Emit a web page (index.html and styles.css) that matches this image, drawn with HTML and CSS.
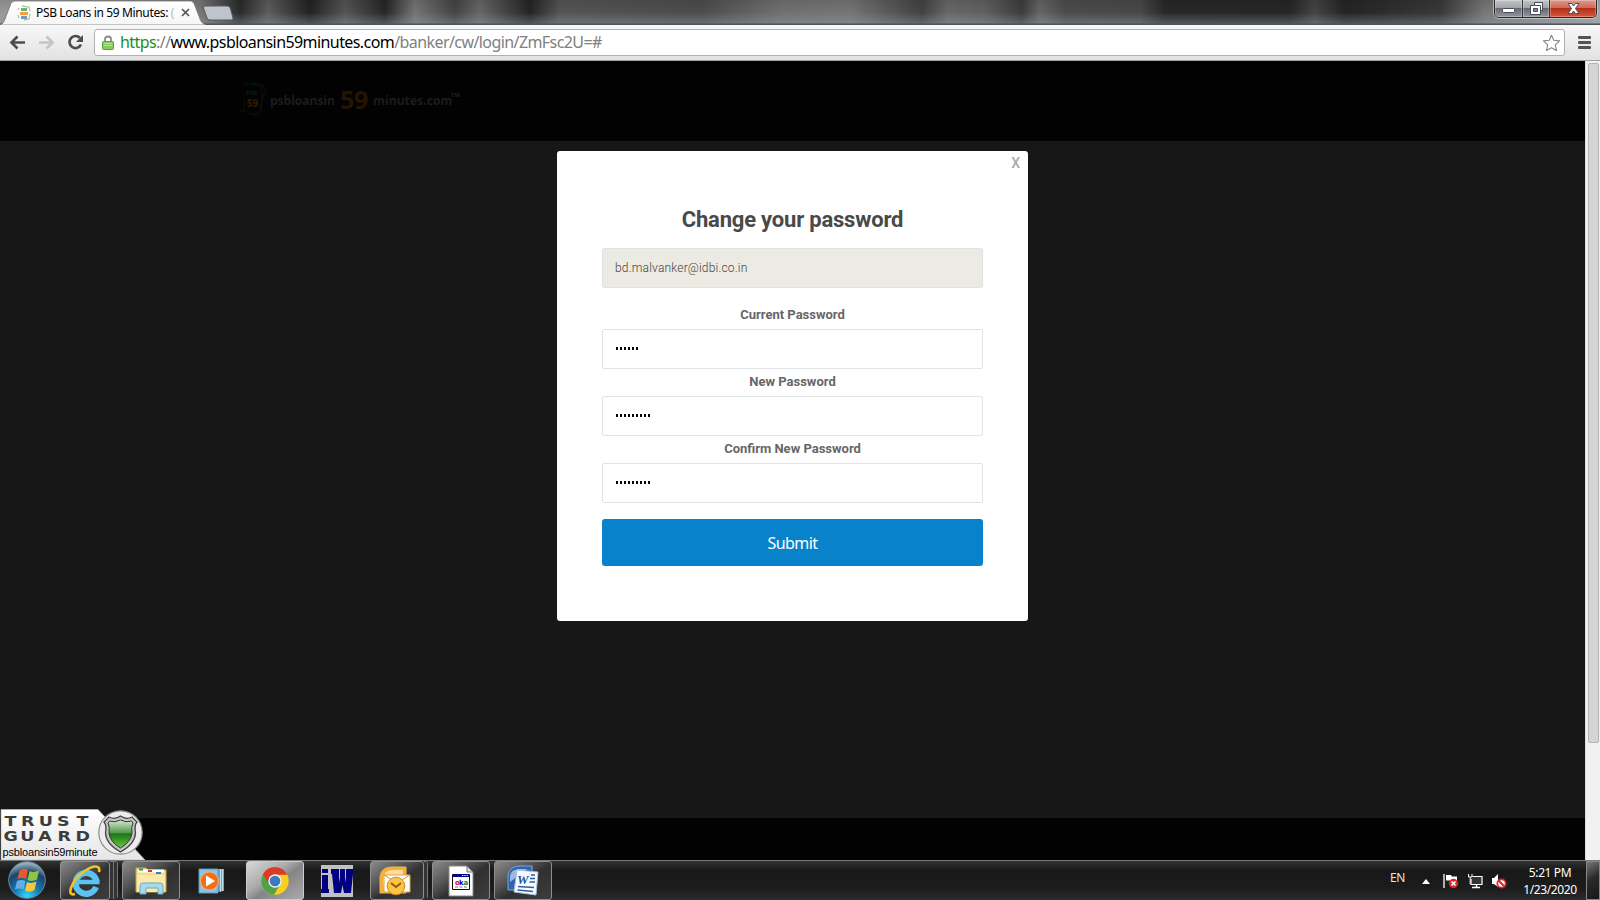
FILE: index.html
```html
<!DOCTYPE html>
<html lang="en">
<head>
<meta charset="utf-8">
<title>PSB Loans in 59 Minutes</title>
<link rel="stylesheet" href="styles.css">
</head>
<body>
<div class="screen">
  <header class="titlebar">
    <svg class="tabshape" width="240" height="25" viewBox="0 0 240 25">
      <defs><linearGradient id="tabg" x1="0" y1="0" x2="0" y2="1"><stop offset="0" stop-color="#fff"/><stop offset="1" stop-color="#f5f5f5"/></linearGradient></defs>
      <path d="M0 25C3 24 4 22 5 19L10 6C11 2 13 1 16 1H189C193 1 194 3 195 6L200 19C201 22 203 24 206 25Z" fill="url(#tabg)" stroke="#777" stroke-width=".8"/>
      <path d="M205 6H227C229 6 230 7 230.500 9L233 18Q233.500 20 231 20H210Q208 20 207 18L203.500 8Q203 6 205 6Z" fill="#bfc4ca" stroke="#555b63" stroke-width="1"/>
    </svg>
    <div class="tab">
      <svg width="16" height="16" viewBox="0 0 16 16"><path d="M6 1L13 2 14 6M14 9L13 14 8 15M3 13L2 10M2 5L3 3" fill="none" stroke="#a9ce91" stroke-width="1.300"/><path d="M5 3H11V6H5Z" fill="#73a98c"/><path d="M4 7H12V10H4Z" fill="#f2a13b"/><path d="M5 11H11V14H5Z" fill="#7897bd"/></svg>
      <span class="tab-title">PSB Loans in 59 Minutes: <i>(</i></span>
      <svg class="tab-close" width="9" height="9" viewBox="0 0 9 9"><path d="M1 1L8 8M8 1L1 8" stroke="#555" stroke-width="1.7"/></svg>
    </div>
    <div class="winbtns">
      <span class="wb min"><svg width="13" height="5"><rect x=".5" y=".5" width="12" height="4" rx="1" fill="#fff" stroke="#474b5b"/></svg></span>
      <span class="wb max"><svg width="13" height="13" viewBox="0 0 13 13"><path d="M4.500 .5H12.500V8.500H10.500V12.500H.5V3.500H4.500Z" fill="#fff" stroke="#474b5b"/><path d="M3.500 6.500H7.500V9.500H3.500Z" fill="#888" stroke="#474b5b"/><path d="M4.500 3.500H10.500V9" fill="none" stroke="#474b5b"/></svg></span>
      <span class="wb close"><svg width="13" height="11" viewBox="0 0 13 11"><path d="M1 .5H4.500L6.500 3 8.500 .5H12L8.500 5.500 12 10.500H8.500L6.500 8 4.500 10.500H1L4.500 5.500Z" fill="#fff" stroke="#474b5b"/></svg></span>
    </div>
  </header>

  <nav class="toolbar">
    <svg class="navicons" width="94" height="35" viewBox="0 0 94 35">
      <g fill="none" stroke-width="2.700"><path d="M25 17.500H12M17.500 11.500L11.500 17.500L17.500 23.500" stroke="#4d4d4d"/><path d="M39 17.500H52M46.500 11.500L52.500 17.500L46.500 23.500" stroke="#c5c5c5"/><path d="M80 13A6 6 0 1 0 81 19.500" stroke="#4d4d4d"/></g><path d="M83 10V17H76Z" fill="#4d4d4d"/>
    </svg>
    <div class="address">
      <svg width="12" height="15" viewBox="0 0 12 15"><path d="M3 7V4Q3 1.500 6 1.500T9 4V7" fill="none" stroke="#8c8c8c" stroke-width="1.800"/><rect x=".5" y="6.500" width="11" height="8" rx="1" fill="#8acb60" stroke="#58a533"/><path d="M2 8.500H10M2 10.500H10" stroke="#b4e28f"/></svg>
      <span class="url"><b class="sec">https</b>://<b>www.psbloansin59minutes.com</b>/banker/cw/login/ZmFsc2U=#</span>
      <svg class="star" width="19" height="18" viewBox="0 0 19 18"><path d="M9.500 1.200L11.800 6.300 17.600 6.900 13.300 10.800 14.500 16.500 9.500 13.700 4.500 16.500 5.700 10.800 1.400 6.900 7.200 6.300Z" fill="#fff" stroke="#858585" stroke-width="1.100" stroke-linejoin="round"/></svg>
    </div>
    <span class="menu"><i></i><i></i><i></i></span>
  </nav>

  <div class="content">
    <main class="page">
      <div class="site-head">
        <svg width="32" height="38" viewBox="0 0 32 38"><g fill="none" stroke="#0b1207"><path d="M8 3L24 4 23 33 6 31ZM13 1L28 7 19 35 1 29"/></g><path d="M7 5H21V32H7Z" fill="#020203"/><text x="14" y="14" text-anchor="middle" class="l-psb">PSB</text><text x="14.500" y="26" text-anchor="middle" class="l-59">59</text></svg>
        <span class="brand b1">psbloansin</span><span class="brand-num">59</span><span class="brand b2">minutes.com</span><span class="tm">TM</span>
      </div>
      <section class="backdrop">
        <form class="modal">
          <span class="x">X</span>
          <h1>Change your password</h1>
          <div class="field readonly">bd.malvanker@idbi.co.in</div>
          <label class="first">Current Password</label>
          <div class="field"><span class="dots d6"></span></div>
          <label>New Password</label>
          <div class="field"><span class="dots d9"></span></div>
          <label>Confirm New Password</label>
          <div class="field"><span class="dots d9"></span></div>
          <div class="submit">Submit</div>
        </form>
      </section>
      <div class="site-foot"></div>
      <div class="trust">
        <svg width="146" height="51" viewBox="0 0 146 51">
          <defs><linearGradient id="sh" x1="0" y1="0" x2="0" y2="1"><stop offset="0" stop-color="#d8e8d4"/><stop offset=".45" stop-color="#539b4b"/><stop offset=".5" stop-color="#18761b"/><stop offset="1" stop-color="#6bc936"/></linearGradient>
          <linearGradient id="tr" x1="0" y1="0" x2="0" y2="1"><stop offset="0" stop-color="#fff"/><stop offset="1" stop-color="#e6e6e6"/></linearGradient></defs>
          <path d="M1 .5H98L145 51H1Z" fill="url(#tr)" stroke="#bbb" stroke-width=".7"/>
          <g transform="scale(1.250 1)"><text x="3.600 16.800 31 45.600 61.200" y="17" class="tg">TRUST</text>
          <text x="2.800 16.200 30.600 46 60.400" y="32" class="tg">GUARD</text></g>
          <text x="2.500" y="47" textLength="95" class="tgs">psbloansin59minute</text>
          <circle cx="120.500" cy="23.500" r="21.700" fill="#ececec" stroke="#8c8c8c" stroke-width="1.200"/>
          <path d="M120.500 7Q126 11 132 8L137 13Q134 16 135.500 24Q135 35 120.500 43Q106 35 105.500 24Q107 16 104 13L109 8Q115 11 120.500 7Z" fill="#c5c5c5" stroke="#444" stroke-width="1.300"/>
          <path d="M120.500 11Q126 14 131.500 12L133 14Q131 18 132 24Q131 33 120.500 39Q110 33 109 24Q110 18 108 14L109.500 12Q115 14 120.500 11Z" fill="url(#sh)" stroke="#333" stroke-width="1"/>
        </svg>
      </div>
    </main>
    <aside class="scroll"><div class="thumb"></div></aside>
  </div>

  <footer class="taskbar">
    <svg class="start" width="60" height="39" viewBox="0 0 60 39">
      <defs><radialGradient id="orb" cx=".5" cy=".95" r=".9"><stop offset="0" stop-color="#35d8fa"/><stop offset=".4" stop-color="#1378b5"/><stop offset=".75" stop-color="#1b4469"/><stop offset="1" stop-color="#96afbf"/></radialGradient></defs>
      <circle cx="27" cy="19" r="18.300" fill="url(#orb)" stroke="#6d8796" stroke-width="1"/>
      <path d="M19.500 9.500Q24 6.500 28 9L26 18Q22 16 17.500 18Z" fill="#e7582a"/><path d="M29.500 10Q34 12 39 9.500L37 18.500Q32 21 27.500 19Z" fill="#8fc443"/><path d="M17 20Q21 18 25.500 20L23.500 28.500Q19 26.500 15 28.500Z" fill="#63b0e6"/><path d="M27 21Q31.500 23 36.500 20.500L34.500 29Q29.500 32 25 29.500Z" fill="#fcc63b"/>
    </svg>
    <span class="task ie"><svg width="34" height="32" viewBox="0 0 34 32"><g fill="none" stroke="#5cc2f3" stroke-width="6.200"><path d="M28 22A10.500 10.500 0 1 1 28.500 16.500"/><path d="M9 17H31.500" stroke-width="4.500"/></g><path d="M7 29C-2 32 3 17 14 8C24 0 33-1 31 7" fill="none" stroke="#f5c321" stroke-width="2.600"/></svg></span>
    <span class="stack two"></span>
    <span class="task exp"><svg width="34" height="30" viewBox="0 0 34 30"><path d="M2 2H12L14 4H32V26H2Z" fill="#f3dd91" stroke="#c5a757"/><path d="M4 5H30" stroke="#fff" stroke-width="3"/><path d="M5 3.500H9" stroke="#20a52c" stroke-width="2"/><path d="M14 5H18" stroke="#d43b29" stroke-width="2"/><path d="M22 7H27" stroke="#2880ce" stroke-width="2"/><path d="M3 9H31V26H3Z" fill="#fae9a9"/><path d="M6 28V20Q6 17 9 17H26Q29 17 29 20V28H24V22H12V28Z" fill="#a8daee" stroke="#6ba9c8"/></svg></span>
    <span class="task plain media"><svg width="28" height="26" viewBox="0 0 28 26"><path d="M8 1H26V23L8 25Z" fill="#69a9ce"/><path d="M1 1H20V25H1Z" fill="#8dc4e3" stroke="#5c96ba"/><path d="M22.500 1V24M24.500 1V23" stroke="#c0e0f0"/><circle cx="11.500" cy="13" r="9" fill="#ef6f1b" stroke="#f9b073"/><path d="M8 7.500L17 13 8 18.500Z" fill="#fff"/></svg></span>
    <span class="task lit chrome"><svg width="28" height="28" viewBox="0 0 28 28"><circle cx="14" cy="14" r="13.700" fill="#f9cf20"/><path d="M14 14L2 7.200A13.700 13.700 0 0 1 26 7.500H14Z" fill="#dc3a2b"/><path d="M2 7.200A13.700 13.700 0 0 0 13 27.700L19.500 17 14 14Z" fill="#4fa344"/><path d="M2 7.200L8 17.500A7 7 0 0 1 14 7.500H26A13.700 13.700 0 0 0 2 7.200Z" fill="#dc3a2b"/><circle cx="14" cy="14" r="6.700" fill="#f3f3f3"/><circle cx="14" cy="14" r="5.300" fill="#3d79c2"/></svg></span>
    <span class="task plain iw"><svg width="32" height="32" viewBox="0 0 32 32"><path d="M0 0H32V32H0Z" fill="#c1c1c1"/><g fill="#000080"><path d="M1 4H7V8H1ZM1 10H7V24H8V28H0V24H1ZM10 4H18V12L19 18V4H24V12L25 18V4H32V9L30 28H23L21.500 20 20 28H13L11 9H10Z"/></g></svg></span>
    <span class="task out"><svg width="32" height="30" viewBox="0 0 32 30"><path d="M1 27V11Q2 1 13 1H27V27Z" fill="#f6ad38" stroke="#f6b84a"/><path d="M4 24V12Q5 4 14 4H24V10H6Z" fill="#fbdc9e"/><path d="M5 9H31V26H5Z" fill="#fff" stroke="#e1a136"/><path d="M5 9L18 17 31 9" fill="none" stroke="#d79737"/><circle cx="17" cy="20" r="8.800" fill="#fbc646" stroke="#d4871b"/><path d="M12 17L17 21 22 17" fill="none" stroke="#8e5c14" stroke-width="2"/></svg></span>
    <span class="stack one"></span>
    <span class="task oka"><svg width="26" height="32" viewBox="0 0 26 32"><path d="M1 1H19L25 7V31H1Z" fill="#fff" stroke="#888"/><path d="M19 1V7H25Z" fill="#ddd" stroke="#777"/><path d="M4.500 9.500H21.500V24.500H4.500Z" fill="#fff" stroke="#111"/><path d="M5 9H21V12H5Z" fill="#000080"/><path d="M14 10.500H20" stroke="#fff" stroke-dasharray="1.300 1"/><text x="7" y="19.500" class="oka-t" fill="#d00020">o</text><text x="11" y="19.500" class="oka-t" fill="#0000d0">k</text><text x="15.500" y="19.500" class="oka-t" fill="#008a32">a</text><path d="M7 22H19" stroke="#777" stroke-dasharray="3 1.500"/></svg></span>
    <span class="task word"><svg width="32" height="31" viewBox="0 0 32 31"><path d="M1 25V11Q2 1 13 1H25V25Z" fill="#3263ad" stroke="#7ba5dd"/><path d="M3 17V11Q4 4 13 4H20Z" fill="#99b9e6"/><path d="M10 5L31 7 29 30 7 27Z" fill="#f6f9ff" stroke="#a9bddb"/><text x="10" y="19" class="word-w">W</text><path d="M24 10H28M23 13.500H28M22.500 17H28M11 21.500L27 22.500M10.500 25L26 26.500" stroke="#345c9d" stroke-width="1.700"/></svg></span>
    <div class="tray">
      <span class="en">EN</span>
      <svg class="up" width="8" height="5"><path d="M0 5L4 0 8 5Z" fill="#fff"/></svg>
      <svg class="flag" width="16" height="16" viewBox="0 0 16 16"><path d="M1 1V15" stroke="#fff" stroke-width="1.300"/><path d="M3 2H8L9 3.500H14V9H8L7 7.500H3Z" fill="#fff"/><circle cx="10.500" cy="10.500" r="4.700" fill="#dc2926"/><path d="M8.500 8.500L12.500 12.500M12.500 8.500L8.500 12.500" stroke="#fff" stroke-width="1.600"/></svg>
      <svg class="net" width="16" height="16" viewBox="0 0 16 16"><path d="M5.500 3.500H15V11.500H4V6" fill="#343434" stroke="#fff" stroke-width="1.200"/><path d="M9.500 12V14M5 14.500H13" stroke="#fff" stroke-width="1.500"/><path d="M1.500 1V4H5V1M3.200 4V11" fill="none" stroke="#fff"/></svg>
      <svg class="vol" width="16" height="16" viewBox="0 0 16 16"><path d="M1 5H3L7 1V14L3 11H1Z" fill="#fff"/><circle cx="10.500" cy="10.500" r="4.200" fill="#fff" stroke="#dc2926" stroke-width="1.800"/><path d="M7.500 7.500L13.500 13.500" stroke="#dc2926" stroke-width="2"/></svg>
      <div class="clock"><span class="time">5:21 PM</span><span class="date">1/23/2020</span></div>
      <span class="desk"></span>
    </div>
  </footer>
</div>
</body>
</html>
```
FILE: styles.css
```css
* { box-sizing: border-box; }
body { margin: 0; overflow: hidden; background: #000; font-family: "Noto Sans", "Open Sans", sans-serif; }
svg { display: block; flex: none; }
.screen { width: 1600px; height: 900px; display: flex; flex-direction: column; }
.titlebar { position: relative; height: 25px; flex: none; display: flex; justify-content: space-between;
  background: linear-gradient(180deg, rgba(0,0,0,.1), transparent 50%, rgba(150,160,170,.35) 90%, #50545a 97%), linear-gradient(90deg, #999 0, #777 200px, #2a2a2a 240px, #5c5c5c 268px, #222 310px, #555 345px, #262626 385px, #747474 415px, #444 455px, #666 480px, #242424 530px, #555 560px, #4c4c4c 700px, #707070 780px, #757575 850px, #424242 922px, #686868 948px, #606060 985px, #3c3c3c 1022px, #666 1040px, #4c4c4c 1065px, #484848 1140px, #282828 1165px, #262626 1290px, #444 1315px, #242424 1345px, #383838 1440px, #777 1485px, #a5a5a5 1600px); }
.tabshape { position: absolute; left: 0; top: 0; }
.tab { position: relative; display: flex; align-items: center; padding-left: 16px; width: 200px; height: 25px; }
.tab-title { margin-left: 4px; width: 141px; font-size: 12px; letter-spacing: -.36px; color: #000; white-space: nowrap; overflow: hidden; }
.tab-title i { font-style: normal; color: #bbb; }
.tab-close { margin-left: 4px; }
.winbtns { display: flex; width: 103px; height: 18px; margin-right: 3px; border: 1px solid #26282c; border-top: 0; border-radius: 0 0 5px 5px; overflow: hidden; box-shadow: 0 0 0 1px rgba(230,230,230,.55); }
.wb { display: flex; align-items: center; justify-content: center; border-right: 1px solid #33363b; background: linear-gradient(#c4c4c6 0, #a2a4a7 46%, #686a70 50%, #96989d 100%); box-shadow: inset 0 0 0 1px rgba(255,255,255,.28); }
.min { width: 28px; padding-top: 4px; }
.max { width: 27px; padding-bottom: 1px; }
.close { flex: 1; border: 0; padding-bottom: 1px; background: linear-gradient(#dc9a8c 0, #cd6a59 46%, #b52f18 50%, #d5583a 100%); }

.toolbar { height: 36px; flex: none; display: flex; align-items: flex-start; background: linear-gradient(#f8f8f8, #e2e2e2); border-bottom: 1px solid #9fa1a3; }
.address { margin-top: 4px; width: 1471px; height: 27px; border: 1px solid #b0b0b0; border-radius: 3px; background: #fff; display: flex; align-items: center; padding-left: 7px; }
.url { margin-left: 6px; font-size: 16px; line-height: 24px; letter-spacing: -.58px; color: #808080; white-space: nowrap; margin-top: -1px; }
.url b { font-weight: 400; color: #000; }
.url .sec { color: #1a8f1e; }
.star { margin-left: auto; margin-right: 3px; }
.menu { display: flex; flex-direction: column; gap: 2px; margin: 11px 0 0 13px; }
.menu i { width: 13px; height: 3px; background: #555; border-radius: 1px; }

.content { height: 799px; flex: none; display: flex; }
.page { position: relative; width: 1585px; display: flex; flex-direction: column; background: #171717; }
.site-head { height: 80px; flex: none; background: #020202; display: flex; padding: 20px 0 0 238px; }
.l-psb { font: bold 5px "Liberation Sans", sans-serif; fill: #06220f; }
.l-59 { font: 800 10px "Open Sans", sans-serif; fill: #2a1803; }
.brand { font: 700 12px/38px "Open Sans", sans-serif; color: #1c1c1c; white-space: nowrap; padding-top: 1px; }
.b1 { width: 70px; }
.brand-num { width: 33px; font: 700 25px/36px "Open Sans", sans-serif; color: #241400; letter-spacing: -.2px; }
.b2 { width: 78px; letter-spacing: .1px; }
.tm { font: 700 6px/28px "Open Sans", sans-serif; color: #202020; }
.backdrop { flex: 1; display: flex; justify-content: center; align-items: flex-start; padding-top: 10px; }
.modal { position: relative; width: 471px; height: 470px; background: #fff; border-radius: 3px; padding: 55px 45px 0; font-family: Roboto, sans-serif; display: flex; flex-direction: column; }
.x { position: absolute; right: 8px; top: 2px; font: 500 14px/20px Roboto, sans-serif; color: #aaa; }
h1 { margin: 0 0 15px; font-size: 22px; line-height: 27px; font-weight: 700; letter-spacing: -.2px; color: #494949; text-align: center; white-space: nowrap; }
.field { height: 40px; flex: none; border: 1px solid #dce4e5; border-radius: 2px; padding: 0 12px; display: flex; align-items: center; font-size: 12px; color: #555; }
.readonly { background: #ebebe4; font-weight: 300; letter-spacing: .18px; color: #444; }
label { height: 27px; flex: none; line-height: 25px; text-align: center; font-size: 13px; font-weight: 700; color: #666; }
.first { height: 41px; padding-top: 14px; }
.dots { height: 3px; margin-top: -2px; background: repeating-linear-gradient(90deg, #0b0018 0 2px, transparent 2px 4px); margin-left: 1px; }
.d6 { width: 23px; }
.d9 { width: 35px; }
.submit { margin-top: 16px; height: 47px; flex: none; border-radius: 3px; background: #0982cc; color: #fff; font: 16px/48px "Noto Sans", sans-serif; letter-spacing: -.6px; text-align: center; }
.site-foot { height: 42px; background: #020202; }
.trust { position: absolute; left: 0; bottom: 0; }
.tg { font: 700 14px "DejaVu Sans", sans-serif; fill: #3c3c3c; }
.tgs { font: 11px "Liberation Sans", sans-serif; fill: #000; }
.scroll { width: 15px; background: #f1f1f1; border-left: 1px solid #ddd; padding: 2px 1px 0 2px; }
.thumb { width: 11px; height: 680px; background: #d5d5d5; border: 1px solid #b4b4b4; border-radius: 2px; }

.taskbar { height: 40px; flex: none; display: flex; border-top: 1px solid #77797a; background: linear-gradient(#303132, #181818 25%, #1c1c1c 70%, #2b2b2b); }
.task { width: 58px; height: 39px; border: 1px solid #8e8e8e; border-radius: 3px; display: flex; align-items: center; justify-content: center; background: linear-gradient(145deg, #8a8a8a 0, #555 35%, #303030 55%, #3d3d3d 100%); }
.plain { border-color: transparent; background: none; }
.lit { border-color: #ccc; background: linear-gradient(145deg, #d8d8d8 0, #aaa 40%, #858585 55%, #ababab 100%); }
.ie { width: 50px; }
.stack { height: 38px; border-top: 1px solid #777; background: repeating-linear-gradient(90deg, #333 0 3px, #747474 3px 4px); border-radius: 0 3px 3px 0; }
.two { width: 8px; margin-right: 4px; }
.one { width: 4px; margin-right: 4px; }
.media { width: 64px; }
.chrome { margin-left: 2px; }
.iw { width: 66px; }
.out { width: 54px; padding-right: 4px; }
.word { margin-left: 4px; }
.oka-t { font: bold 7px "DejaVu Sans", sans-serif; }
.word-w { font: italic bold 13px "Liberation Serif", serif; fill: #24539b; }
.tray { display: flex; margin-left: auto; color: #fff; }
.en { width: 32px; font-size: 12px; line-height: 33px; letter-spacing: -.4px; color: #e6e6d8; }
.up { margin-top: 18px; }
.flag { margin: 12px 0 0 13px; }
.net { margin: 12px 0 0 8px; }
.vol { margin: 12px 0 0 8px; }
.clock { width: 72px; margin-left: 7px; padding-top: 3px; display: flex; flex-direction: column; align-items: center; font-size: 12px; line-height: 17px; letter-spacing: -.4px; }
.desk { width: 14px; height: 39px; border: 1px solid #858585; background: linear-gradient(150deg, #777, #2a2a2a 45%, #171717); }
```
